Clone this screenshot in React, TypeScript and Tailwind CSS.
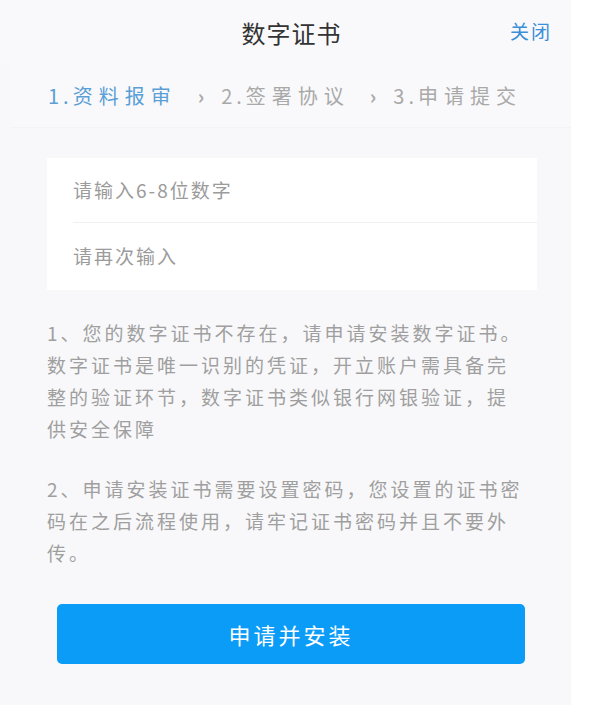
import React from "react";

const font = { fontFamily: '"Noto Sans CJK SC", "Noto Sans", sans-serif' };

export default function App() {
  return (
    <div className="w-[592px] h-[705px] bg-white overflow-hidden flex" style={font}>
      <div className="w-[571px] h-full flex flex-col bg-[#f8f8fa]">
        {/* Header */}
        <div className="h-[65px] flex items-center relative bg-[#f9f9fb]">
          <div className="w-full pl-[12px] text-center text-[24px] tracking-[1px] text-[#333333] leading-none">数字证书</div>
          <div className="absolute right-[19px] top-[21px] text-[19px] tracking-[2px] text-[#3a8fd6] leading-none">关闭</div>
        </div>
        <div className="flex-1 flex flex-col ml-[10px] bg-[#f8f8fa]">
          {/* Steps */}
          <div className="h-[63px] flex items-center pl-[38px] text-[20px] tracking-[6px] leading-none bg-[#f9f9fb] border-b border-[#f4f4f6]">
            <span className="text-[#5a9fd6]"><span className="tracking-[4px]">1.</span>资料报审</span>
            <span className="ml-[21px] text-[#a9a9a9] tracking-normal font-semibold">›</span>
            <span className="ml-[17px] text-[#a9a9a9]"><span className="tracking-[4px]">2.</span>签署协议</span>
            <span className="ml-[20px] text-[#a9a9a9] tracking-normal font-semibold">›</span>
            <span className="ml-[17px] text-[#a9a9a9]"><span className="tracking-[4px]">3.</span>申请提交</span>
          </div>
          {/* Inputs card */}
          <div className="mt-[30px] ml-[37px] w-[490px] bg-white flex flex-col">
            <div className="h-[64px] flex items-center pl-[26px] text-[19px] tracking-[2px] text-[#9b9b9b]">请输入6-8位数字</div>
            <div className="ml-[26px] h-px bg-[#f0f0f2]" />
            <div className="h-[67px] flex items-center pl-[26px] text-[19px] tracking-[2px] text-[#9b9b9b]">请再次输入</div>
          </div>
          {/* Notes */}
          <div className="mt-[27px] ml-[37px] w-[480px] text-[19px] leading-[32px] tracking-[3px] text-[#9f9f9f]">
            <p>1、您的数字证书不存在，请申请安装数字证书。数字证书是唯一识别的凭证，开立账户需具备完整的验证环节，数字证书类似银行网银验证，提供安全保障</p>
            <p className="mt-[28px]">2、申请安装证书需要设置密码，您设置的证书密码在之后流程使用，请牢记证书密码并且不要外传。</p>
          </div>
          {/* Button */}
          <div className="mt-[35px] ml-[47px] w-[468px] h-[60px] rounded-[5px] bg-[#0b9cf8] flex items-center justify-center text-white text-[22px] tracking-[3px]">
            申请并安装
          </div>
        </div>
      </div>
    </div>
  );
}
